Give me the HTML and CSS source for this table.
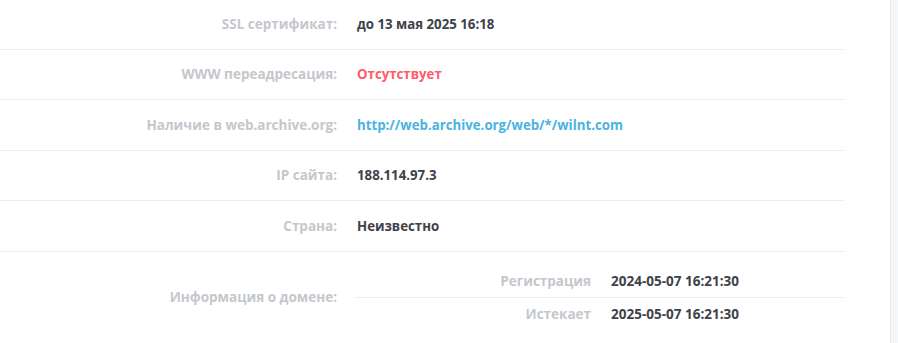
FILE: index.html
```html
<!DOCTYPE html>
<html lang="ru">
<head>
<meta charset="utf-8">
<link rel="stylesheet" href="styles.css">
</head>
<body>
<div class="page">
  <div class="table">
    <div class="row">
      <div class="label">SSL сертификат:</div>
      <div class="value">до 13 мая 2025 16:18</div>
    </div>
    <div class="row">
      <div class="label">WWW переадресация:</div>
      <div class="value red">Отсутствует</div>
    </div>
    <div class="row">
      <div class="label">Наличие в web.archive.org:</div>
      <div class="value"><a class="link" href="#">http://web.archive.org/web/*/wilnt.com</a></div>
    </div>
    <div class="row">
      <div class="label">IP сайта:</div>
      <div class="value">188.114.97.3</div>
    </div>
    <div class="row">
      <div class="label">Страна:</div>
      <div class="value">Неизвестно</div>
    </div>
    <div class="row row-domain">
      <div class="label">Информация о домене:</div>
      <div class="nested">
        <div class="sub">
          <div class="sub-label">Регистрация</div>
          <div class="sub-value">2024-05-07 16:21:30</div>
        </div>
        <div class="sub">
          <div class="sub-label">Истекает</div>
          <div class="sub-value">2025-05-07 16:21:30</div>
        </div>
      </div>
    </div>
  </div>
  <div class="side"></div>
</div>
</body>
</html>
```
FILE: styles.css
```css
html, body {
  margin: 0;
  padding: 0;
  background: #ffffff;
}
body {
  font-family: "Open Sans", "Liberation Sans", sans-serif;
  font-size: 13.5px;
  font-weight: 700;
  color: #3e4249;
}
.page {
  display: flex;
  height: 343px;
  overflow: hidden;
}
.table {
  width: 845px;
  margin-top: -1px;
}
.row {
  display: grid;
  grid-template-columns: 338px 1fr;
  column-gap: 19px;
  align-items: center;
  height: 49.5px;
  border-bottom: 1px solid #ececee;
}
.label {
  text-align: right;
  color: #c4c7cc;
  padding-right: 1px;
}
.value {
  color: #3e4249;
  font-size: 13.25px;
}
.red {
  color: #ff5a6c;
}
.link {
  color: #4ab3e2;
  text-decoration: none;
}
.row-domain {
  height: auto;
  padding: 13px 0;
}
.nested {
  margin-left: -2px;
}
.sub {
  display: grid;
  grid-template-columns: 236px 1fr;
  column-gap: 20px;
  align-items: center;
  height: 32px;
}
.sub + .sub {
  border-top: 1px solid #ececee;
}
.sub-label {
  text-align: right;
  color: #c4c7cc;
}
.sub-value {
  color: #3e4249;
}
.side {
  margin-left: 46px;
  width: 7px;
  border-left: 1px solid #e8eaed;
  background: #f5f6f8;
}
```
